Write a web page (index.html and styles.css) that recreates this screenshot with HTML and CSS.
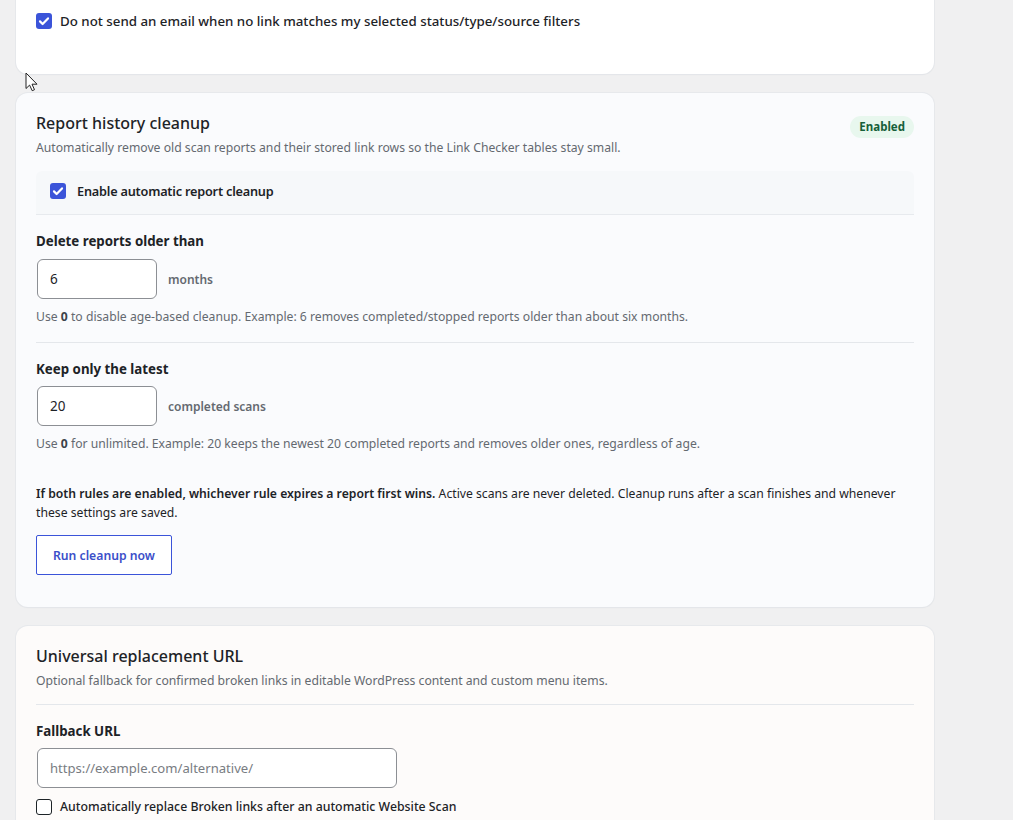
FILE: index.html
```html
<!DOCTYPE html>
<html lang="en">
<head>
<meta charset="utf-8">
<title>Link Checker settings</title>
<link rel="stylesheet" href="styles.css">
</head>
<body>
<main class="settings">
  <section class="card card-plain card-tail">
    <label class="check-line lead">
      <span class="box checked"><svg viewBox="0 0 16 16" width="16" height="16"><path d="M4 8.4l2.6 2.6L12 5.4" fill="none" stroke="#fff" stroke-width="2.2" stroke-linecap="round" stroke-linejoin="round"/></svg></span>
      <span>Do not send an email when no link matches my selected status/type/source filters</span>
    </label>
  </section>

  <section class="card card-cool">
    <header class="card-head">
      <div>
        <h2 class="card-title">Report history cleanup</h2>
        <p class="card-desc">Automatically remove old scan reports and their stored link rows so the Link Checker tables stay small.</p>
      </div>
      <span class="badge">Enabled</span>
    </header>

    <div class="toggle-row">
      <label class="check-line strong">
        <span class="box checked"><svg viewBox="0 0 16 16" width="16" height="16"><path d="M4 8.4l2.6 2.6L12 5.4" fill="none" stroke="#fff" stroke-width="2.2" stroke-linecap="round" stroke-linejoin="round"/></svg></span>
        <span>Enable automatic report cleanup</span>
      </label>
    </div>

    <div class="field">
      <div class="field-label">Delete reports older than</div>
      <div class="input-line">
        <div class="input num">6</div>
        <span class="unit">months</span>
      </div>
      <p class="help">Use <b>0</b> to disable age-based cleanup. Example: 6 removes completed/stopped reports older than about six months.</p>
    </div>

    <hr class="rule">

    <div class="field">
      <div class="field-label">Keep only the latest</div>
      <div class="input-line">
        <div class="input num">20</div>
        <span class="unit">completed scans</span>
      </div>
      <p class="help">Use <b>0</b> for unlimited. Example: 20 keeps the newest 20 completed reports and removes older ones, regardless of age.</p>
    </div>

    <p class="note"><b>If both rules are enabled, whichever rule expires a report first wins.</b> Active scans are never deleted. Cleanup runs after a scan finishes and whenever these settings are saved.</p>

    <button class="btn-outline" type="button">Run cleanup now</button>
  </section>

  <section class="card card-warm">
    <header class="card-head">
      <div>
        <h2 class="card-title">Universal replacement URL</h2>
        <p class="card-desc">Optional fallback for confirmed broken links in editable WordPress content and custom menu items.</p>
      </div>
    </header>
    <hr class="rule rule-head">
    <div class="field">
      <div class="field-label">Fallback URL</div>
      <div class="input wide placeholder">https://example.com/alternative/</div>
    </div>
    <label class="check-line after-input">
      <span class="box"></span>
      <span>Automatically replace Broken links after an automatic Website Scan</span>
    </label>
  </section>
</main>

<svg class="pointer" viewBox="0 0 13 20" width="13" height="20"><path d="M1 1v15.5l3.6-3.4 2.6 5.6 2.3-1-2.5-5.5h5z" fill="#fff" stroke="#222" stroke-width="1" stroke-linejoin="round"/></svg>
</body>
</html>
```

FILE: styles.css
```css
html, body {
  margin: 0;
  padding: 0;
}

body {
  background: #f0f0f1;
  font-family: "Noto Sans", "Open Sans", sans-serif;
  color: #1d2327;
  width: 1013px;
  height: 820px;
  overflow: hidden;
  position: relative;
}

.settings {
  display: flex;
  flex-direction: column;
  gap: 19px;
  width: 918px;
  margin-left: 16px;
  margin-top: -36px;
}

.card {
  border-radius: 12px;
  padding: 18px 20px 32px;
  box-shadow: 0 0 0 1px rgba(222, 225, 231, 0.5), 0 1px 2px rgba(0, 0, 0, 0.03);
}

.card-plain { background: #ffffff; }
.card-cool { background: #fafbfd; }
.card-warm { background: #fdfbfa; }

.card-tail {
  padding-top: 49px;
  padding-bottom: 45px;
}

.card-head {
  display: flex;
  justify-content: space-between;
  align-items: flex-start;
}

.card-title {
  margin: 0;
  font-size: 16px;
  font-weight: 500;
  line-height: 24px;
  color: #1d2327;
}

.card-desc {
  margin: 3px 0 0;
  font-size: 12.2px;
  line-height: 20px;
  color: #646970;
}

.badge {
  margin-top: 5px;
  padding: 2px 9px;
  border-radius: 999px;
  background: #e8f7ee;
  color: #16603a;
  font-size: 11.5px;
  font-weight: 700;
  line-height: 18px;
}

.check-line {
  display: flex;
  align-items: center;
  gap: 8px;
  font-size: 12.3px;
  font-weight: 500;
  line-height: 16px;
  color: #1d2327;
}

.check-line.lead {
  font-size: 13.3px;
}

.check-line.strong {
  gap: 11px;
  font-size: 12.7px;
  font-weight: 600;
  letter-spacing: -0.2px;
}

.box {
  width: 16px;
  height: 16px;
  flex: none;
  box-sizing: border-box;
  border-radius: 3px;
  border: 1.5px solid #1d2327;
  background: #fff;
  display: flex;
}

.box.checked {
  border: none;
  background: #3b54d9;
}

.toggle-row {
  margin-top: 13px;
  padding: 12px 14px 15px;
  background: #f6f8fa;
  border-bottom: 1px solid #e7eaee;
  border-radius: 6px 6px 0 0;
}

.field {
  margin-top: 16px;
}

.field-label {
  font-size: 13.3px;
  font-weight: 700;
  line-height: 20px;
  color: #1d2327;
}

.input-line {
  display: flex;
  align-items: center;
  gap: 11px;
  margin-top: 8px;
}

.input {
  box-sizing: border-box;
  height: 40px;
  border: 1px solid #8c8f94;
  border-radius: 6px;
  background: #fff;
  padding: 0 12px;
  display: flex;
  align-items: center;
  font-size: 13.5px;
  color: #1d2327;
}

.input.num { width: 120px; margin-left: 1px; }

.input.wide {
  width: 360px;
  margin: 7px 0 0 1px;
  font-size: 13.1px;
}

.placeholder { color: #787c82; }

.unit {
  font-size: 12px;
  font-weight: 600;
  color: #646970;
}

.help {
  margin: 9px 0 0;
  font-size: 12.2px;
  line-height: 18px;
  color: #646970;
}

.help b {
  color: #3c434a;
  font-weight: 700;
}

.rule {
  margin: 16px 0 0;
  border: none;
  border-top: 1px solid #e4e7eb;
}

.rule + .field { margin-top: 16px; }

.rule + .field .input-line { margin-top: 7px; }

.rule-head { margin-top: 13px; }

.note {
  margin: 31px 0 0;
  font-size: 12.2px;
  line-height: 19px;
  color: #1d2327;
}

.note b { font-weight: 600; }

.btn-outline {
  align-self: flex-start;
  margin-top: 13px;
  height: 40px;
  padding: 0 16px;
  border: 1px solid #3b54d9;
  border-radius: 2px;
  background: #fff;
  color: #3b4fc9;
  font-family: inherit;
  font-size: 12.2px;
  font-weight: 600;
  cursor: pointer;
}

.after-input { margin-top: 11px; }

.pointer {
  position: absolute;
  left: 25px;
  top: 72px;
}
```
